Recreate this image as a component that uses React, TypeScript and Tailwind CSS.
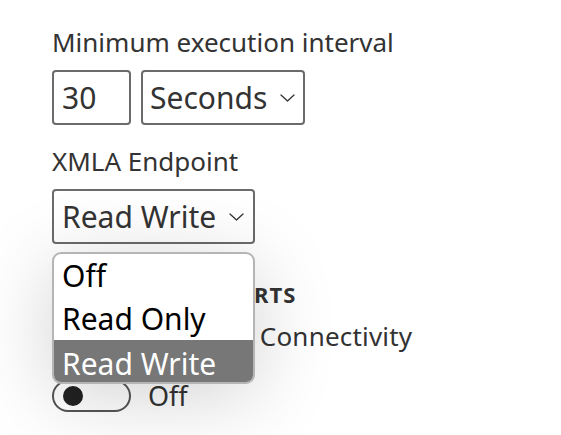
import React from 'react'

const font = { fontFamily: '"Noto Sans", "Segoe UI", sans-serif' }

function Chevron() {
  return (
    <svg width="15" height="8" viewBox="0 0 15 8" className="ml-[13px]" fill="none">
      <polyline points="1,1 7.5,7 14,1" stroke="#333" strokeWidth="1.3" strokeLinecap="round" strokeLinejoin="round" />
    </svg>
  )
}

export default function App() {
  return (
    <div className="min-h-[435px] w-[561px] bg-white text-[#333] pl-[52px] pt-[24px]" style={font}>
      <div className="text-[26px] leading-[36px]">Minimum execution interval</div>

      <div className="mt-[10px] flex gap-[10px]">
        <div className="w-[79px] h-[55px] border-2 border-[#6b6b6b] rounded-[4px] flex items-center pl-[8px] text-[30px]">30</div>
        <div className="w-[164px] h-[55px] border-2 border-[#6b6b6b] rounded-[4px] flex items-center pl-[7px] text-[30px]">
          Seconds
          <Chevron />
        </div>
      </div>

      <div className="mt-[18px] text-[26px] leading-[36px]">XMLA Endpoint</div>

      <div className="relative mt-[10px] w-[203px]">
        <div className="w-[203px] h-[55px] border-2 border-[#6b6b6b] rounded-[4px] flex items-center pl-[8px] text-[30px]">
          Read Write
          <Chevron />
        </div>

        <div className="absolute left-0 top-[63px] z-10 w-[203px] h-[132px] rounded-[9px] border-2 border-[#b5b5b5] bg-white overflow-hidden shadow-[0_12px_80px_rgba(0,0,0,0.18)] text-black text-[30px] leading-[36px]">
          <div className="pl-[8px] pt-[4px] h-[43px]">Off</div>
          <div className="pl-[8px] pt-[4px] h-[43px]">Read Only</div>
          <div className="pl-[8px] pt-[6px] h-[43px] bg-[#777777] text-white">Read Write</div>
        </div>
      </div>

      <div className="mt-[36px] text-[22px] font-bold leading-[28px] tracking-[1px]">PAGINATED REPORTS</div>
      <div className="mt-[10px] text-[26px] leading-[36px] tracking-[0.2px]">Allow Outbound Connectivity</div>

      <div className="mt-[24px] flex items-center gap-[17px]">
        <div className="w-[79px] h-[32px] rounded-full border-2 border-[#555] flex items-center pl-[9px]">
          <div className="w-[20px] h-[20px] rounded-full bg-[#222]" />
        </div>
        <span className="text-[27px] leading-[36px]">Off</span>
      </div>
    </div>
  )
}
